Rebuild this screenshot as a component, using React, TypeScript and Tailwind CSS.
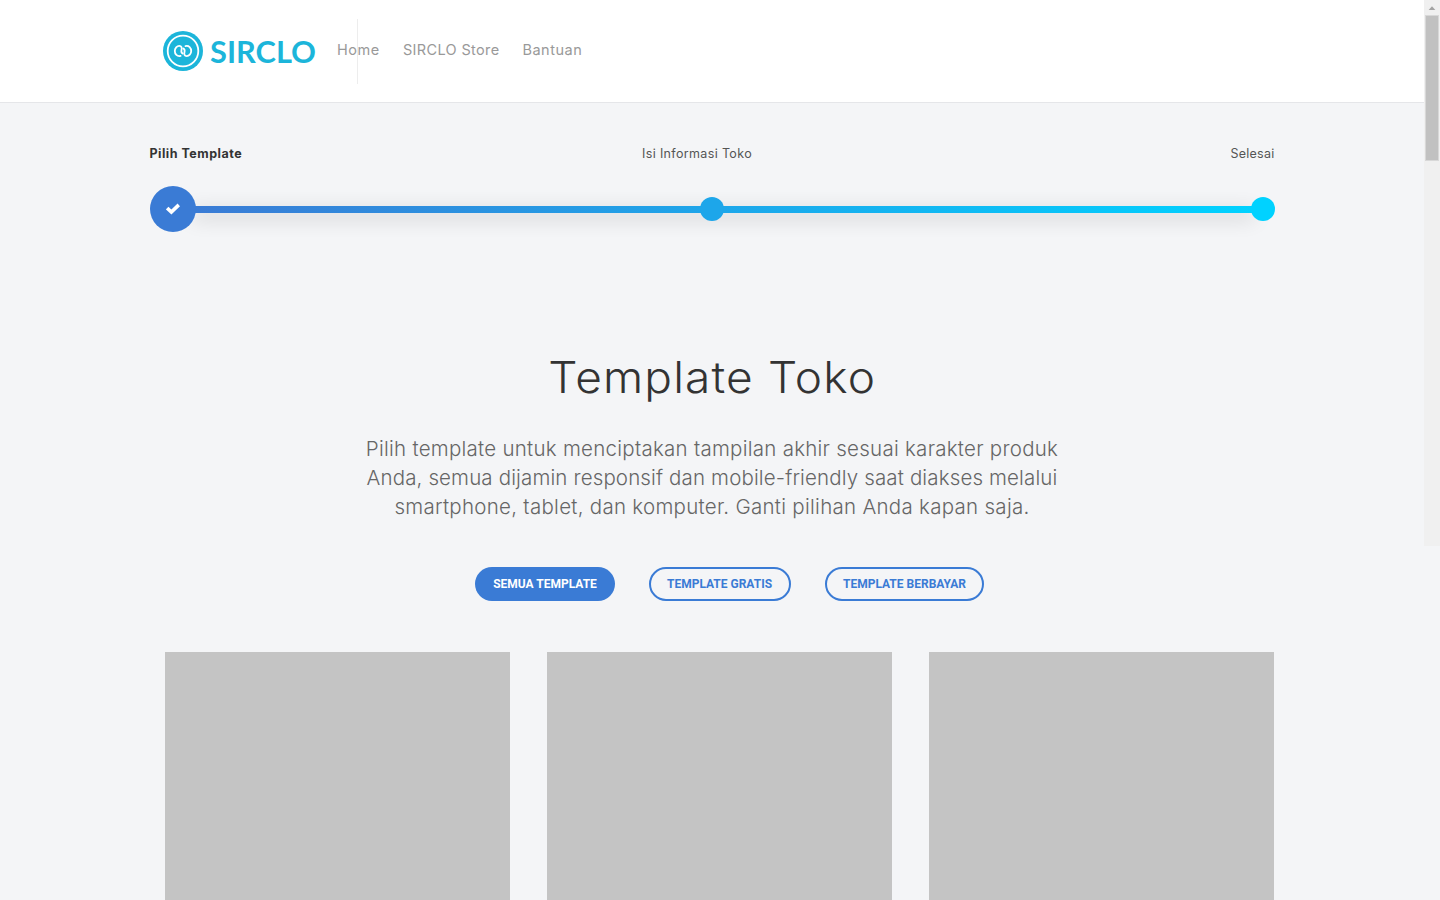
import React from "react";

function Logo() {
  return (
    <div className="flex h-[42px] w-[154px] items-center pb-px">
      <svg className="h-[42px] w-[42px] shrink-0" viewBox="0 0 42 42" fill="none">
        <circle cx="21" cy="21" r="20" fill="#1cb5da" />
        <circle cx="21" cy="21" r="15.3" stroke="#fff" strokeWidth="1.8" />
        <g stroke="#fff" strokeWidth="1.8" strokeLinecap="round">
          <path d="M18.6 25.9C15 26.8 12.8 24 12.8 21C12.8 18 15 15.9 17.3 15.9C19.6 15.9 20.1 17.8 19.5 20C19 22 19.6 23 20.6 23.6" />
          <path d="M23.4 16.1C27 15.2 29.2 18 29.2 21C29.2 24 27 26.1 24.7 26.1C22.4 26.1 21.9 24.2 22.5 22C23 20 22.4 19 21.4 18.4" />
        </g>
      </svg>
      <span className="ml-[6px] pt-px font-['Lato'] text-[30.8px] leading-[42px] font-bold whitespace-nowrap text-[#1cb5da]">SIRCLO</span>
    </div>
  );
}

const templates = ["a", "b", "c"];

export default function App() {
  return (
    <div className="flex h-[900px] w-[1440px] items-start overflow-hidden bg-[#f4f5f7] font-['Inter',sans-serif]">
      <div className="w-[1424px] shrink-0">
        <header className="flex h-[103px] items-start border-b border-[#e5e6e9] bg-white pl-[162px]">
          <div className="mt-[19px] flex h-[65px] w-[196px] shrink-0 items-center border-r border-[#ededed]">
            <Logo />
          </div>
          <nav className="-ml-[21px] flex pt-[39px] text-[14.5px] leading-[22px] text-[#999]">
            <a className="mr-[23.3px] tracking-[0.5px]">Home</a>
            <a className="mr-[23px] tracking-[0.35px]">SIRCLO Store</a>
            <a className="tracking-[0.5px]">Bantuan</a>
          </nav>
        </header>

        <main>
          <section className="mx-auto w-[1125px] pt-[41px]">
            <div className="grid grid-cols-3 text-[12.5px] leading-[20px] text-[#555]">
              <span className="font-bold tracking-[0.5px] text-[#333]">Pilih Template</span>
              <span className="-translate-x-[15px] justify-self-center tracking-[0.35px]">Isi Informasi Toko</span>
              <span className="justify-self-end tracking-[0.25px]">Selesai</span>
            </div>
            <div className="mt-[22px] flex h-[46px] items-center">
              <div className="z-10 flex size-[46px] shrink-0 items-center justify-center rounded-full bg-[#3a7bd5]">
                <svg className="h-[12px] w-[14px]" viewBox="0 0 14 12">
                  <path d="M1.2 5.1L5.4 9.1L12.8 1.9" fill="none" stroke="#fff" strokeWidth="3.6" />
                </svg>
              </div>
              <div className="-mx-[4px] flex h-[7px] flex-1 items-center justify-center bg-linear-to-r/srgb from-[#3a7bd5] to-[#00d2ff] shadow-[0_5px_20px_rgba(0,0,0,0.2)]">
                <div className="mr-[23px] size-[24px] rounded-full bg-[#1da6ea]" />
              </div>
              <div className="z-10 size-[24px] shrink-0 rounded-full bg-[#00d2ff]" />
            </div>
          </section>

          <section className="flex flex-col items-center pt-[119px]">
            <h1 className="scale-x-[1.07] pl-px text-[43px] leading-[52px] font-light tracking-[1.1px] text-[#333]">Template Toko</h1>
            <p className="mt-[30.5px] text-center text-[20.5px] leading-[29.2px] font-light whitespace-nowrap text-[#666]">
              <span className="tracking-[0.26px]">Pilih template untuk menciptakan tampilan akhir sesuai karakter produk</span>
              <br />
              <span className="tracking-[0.14px]">Anda, semua dijamin responsif dan mobile-friendly saat diakses melalui</span>
              <br />
              <span className="tracking-[0.28px]">smartphone, tablet, dan komputer. Ganti pilihan Anda kapan saja.</span>
            </p>
          </section>

          <div className="mt-[45.5px] ml-[475px] flex gap-[34px] font-['Roboto'] text-[12px] font-bold whitespace-nowrap text-[#3a7bd5]">
            <button className="h-[34px] w-[140px] rounded-full bg-[#3a7bd5] text-white">SEMUA TEMPLATE</button>
            <button className="h-[34px] w-[142px] rounded-full border-2 border-[#3a7bd5] pr-px">TEMPLATE GRATIS</button>
            <button className="h-[34px] w-[159px] rounded-full border-2 border-[#3a7bd5]">TEMPLATE BERBAYAR</button>
          </div>

          <div className="mt-[51px] ml-[165px] flex gap-[37px]">
            {templates.map((id) => (
              <div key={id} className="h-[248px] w-[345px] bg-[#c4c4c4]" />
            ))}
          </div>
        </main>
      </div>

      <div className="flex h-[546px] w-[16px] shrink-0 flex-col items-center bg-[#f0f0f0]">
        <svg className="h-[15px] w-[16px] shrink-0" viewBox="0 0 16 15">
          <path d="M8 6.3L11.3 10H4.7Z" fill="#a3a3a3" />
        </svg>
        <div className="h-[146px] w-[14px] border border-[#d8d8d8] bg-[#c1c1c1]" />
      </div>
    </div>
  );
}
